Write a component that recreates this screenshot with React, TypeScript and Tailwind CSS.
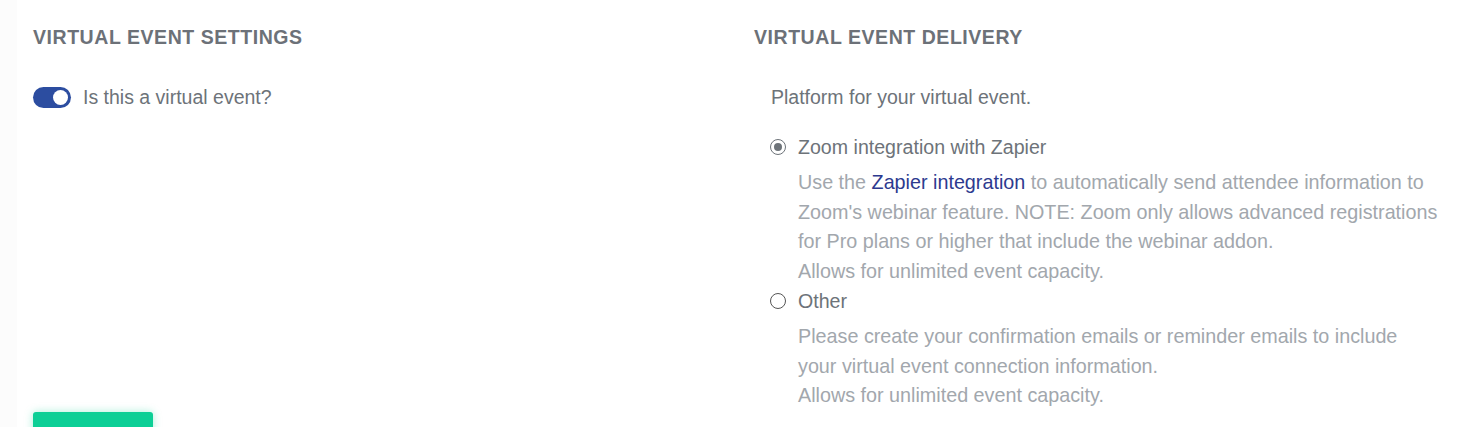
import { useState } from 'react'

export default function App() {
  const [isVirtual, setIsVirtual] = useState(true)
  const [platform, setPlatform] = useState('zoom')

  return (
    <div className="min-h-[427px] bg-[#fcfcfc] pl-[17px] font-['Liberation_Sans',Arial,sans-serif]">
      <div className="min-h-[427px] bg-white pl-4 pt-[25px]">
        <div className="flex">
          {/* left column */}
          <div className="w-[721px] shrink-0">
            <h2 className="text-[19.5px] leading-6 font-bold uppercase tracking-[0.55px] text-[#6c7178]">
              Virtual Event Settings
            </h2>
            <label className="mt-[33px] flex items-center gap-3 leading-[30px] text-[19.5px] text-[#6d7379] cursor-pointer">
              <button
                type="button"
                onClick={() => setIsVirtual(v => !v)}
                className={`relative h-[21px] w-[38px] rounded-full transition-colors ${isVirtual ? 'bg-[#2c4da0]' : 'bg-gray-300'}`}
              >
                <span
                  className={`absolute top-[3px] h-[15px] w-[15px] rounded-full bg-white transition-all ${isVirtual ? 'left-[20px]' : 'left-[3px]'}`}
                />
              </button>
              Is this a virtual event?
            </label>
          </div>

          {/* right column */}
          <div className="flex-1 pr-4">
            <h2 className="text-[19.5px] leading-6 font-bold uppercase tracking-[0.55px] text-[#6c7178]">
              Virtual Event Delivery
            </h2>
            <div className="mt-[33px] pl-[17px]">
              <p className="leading-[30px] text-[19.5px] text-[#6d7379]">Platform for your virtual event.</p>

              <div className="mt-5 -ml-px">
                <RadioOption
                  checked={platform === 'zoom'}
                  onSelect={() => setPlatform('zoom')}
                  label="Zoom integration with Zapier"
                >
                  Use the <a href="#" className="text-[#2d3a8f]">Zapier integration</a> to automatically send attendee information to
                  <br />
                  Zoom's webinar feature. NOTE: Zoom only allows advanced registrations
                  <br />
                  for Pro plans or higher that include the webinar addon.
                  <br />
                  Allows for unlimited event capacity.
                </RadioOption>
                <RadioOption
                  checked={platform === 'other'}
                  onSelect={() => setPlatform('other')}
                  label="Other"
                >
                  Please create your confirmation emails or reminder emails to include
                  <br />
                  your virtual event connection information.
                  <br />
                  Allows for unlimited event capacity.
                </RadioOption>
              </div>
            </div>
          </div>
        </div>

        <button
          type="button"
          className="mt-px h-[40px] w-[120px] rounded-[3px] bg-[#0ccf96] shadow-[0_0_8px_rgba(12,207,150,0.35)]"
        />
      </div>
    </div>
  )
}

function RadioOption({
  checked,
  onSelect,
  label,
  children,
}: {
  checked: boolean
  onSelect: () => void
  label: string
  children: React.ReactNode
}) {
  return (
    <div>
      <label className="flex items-center gap-3 leading-[30px] text-[19.6px] text-[#6d7379] cursor-pointer" onClick={onSelect}>
        <span className={`flex h-4 w-4 items-center justify-center rounded-full border ${checked ? 'border-[#6d7379]' : 'border-[#555]'}`}>
          {checked && <span className="h-2 w-2 rounded-full bg-[#6d7379]" />}
        </span>
        {label}
      </label>
      <p className="mt-[6px] pl-7 leading-[29.5px] text-[19.75px] text-[#a2a7ad]">{children}</p>
    </div>
  )
}
